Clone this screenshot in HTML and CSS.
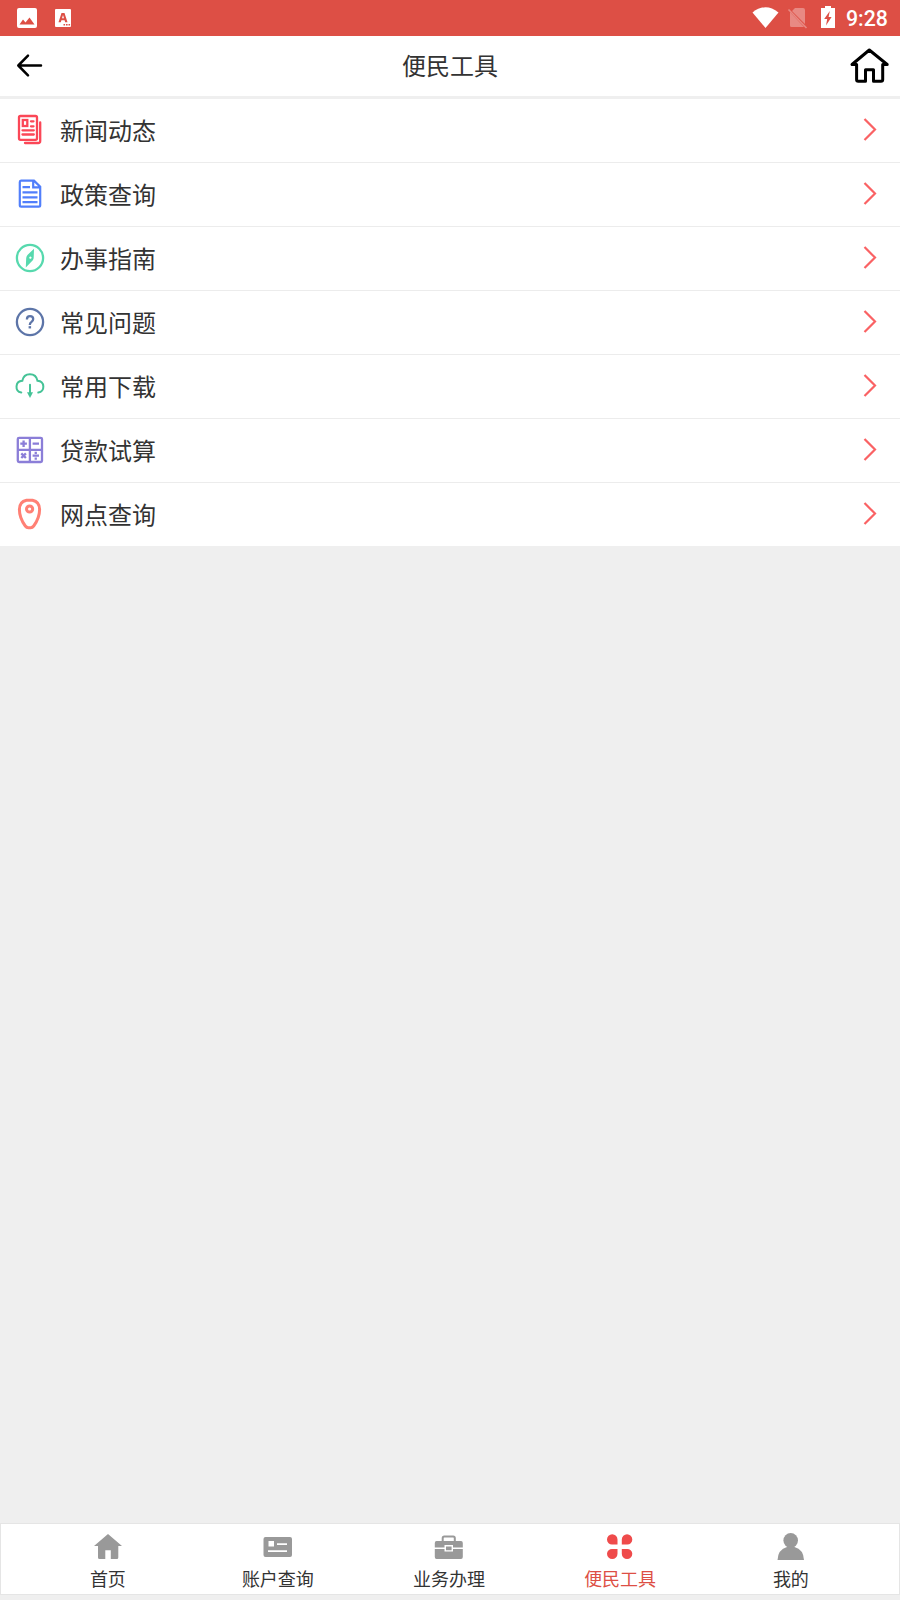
FILE: index.html
```html
<!DOCTYPE html>
<html lang="zh-CN">
<head>
<meta charset="utf-8">
<title>便民工具</title>
<link rel="stylesheet" href="styles.css">
</head>
<body>
<div class="screen">
  <div class="status">
    <svg class="status-left" viewBox="0 0 90 36">
      <path fill="#fff" fill-rule="evenodd" d="M19 8h16q2 0 2 2v16q0 2-2 2h-16q-2 0-2-2v-16q0-2 2-2zM19.500 24.500h15l-5-7-4 5-2.500-3z"/>
      <path fill="#fff" fill-rule="evenodd" d="M56 9h14q1 0 1 1v16q0 1-1 1h-14q-1 0-1-1v-16q0-1 1-1zM61.500 13l-3 9.300h2.300l.6-2h3.200l.6 2h2.300l-3-9.300zM62 18.300l1-3.300 1 3.300zM63.500 24v1.600h1.600v-1.600zM66 24v1.600h1.600v-1.600zM68.500 24v1.600h1.600v-1.600z"/>
    </svg>
    <svg class="status-right" viewBox="750 0 90 36">
      <path fill="#fff" d="M752.500 12.500Q765.500 2 778.500 12.500L765.500 28z"/>
      <path fill="#e88983" d="M795 8h8q2 0 2 2v14l-13-13zM790 12l14 15h-12.500q-1.500 0-1.500-1.500z"/>
      <path stroke="#e88983" stroke-width="1.600" d="M788.500 9.500l18 18.500"/>
      <path fill="#fff" fill-rule="evenodd" d="M825 6h6v2h4v20h-14v-20h4zM829.800 11l-5.600 8h3l-1.200 6.500 5.600-8.500h-3z"/>
    </svg>
    <span class="clock">9:28</span>
  </div>
  <header class="header">
    <svg class="back" viewBox="0 36 60 60"><path d="M41 65.500H18.500M28 55.700L18.300 65.500L28 75.300"/></svg>
    <h1 class="title">便民工具</h1>
    <svg class="home" viewBox="840 36 60 60"><path d="M869.300 50L852 64.500H856.600V79.500Q856.600 81.200 858.300 81.200H865.500V69.700H873.500V81.200H881Q882.700 81.200 882.700 79.500V64.500H887.200Z"/></svg>
  </header>
  <main class="list">
    <a class="row">
      <svg class="icon news" viewBox="15 0 30 63"><rect x="19" y="17" width="18" height="23.800" rx="1.500"/><path d="M40.200 23.500v18.500q0 2-2 2H25"/><rect x="22.800" y="21" width="4.500" height="6"/><path d="M31 22.300h2.500M31 27.300h2.500M22.500 31.300h11.300M22.500 35.500h11.300"/></svg>
      <span class="label">新闻动态</span><svg class="chevron" viewBox="860 0 20 63"><path d="M864.500 20L875 30.600L864.500 41"/></svg>
    </a>
    <a class="row">
      <svg class="icon policy" viewBox="15 0 30 63"><path d="M21 17.700H34L40.200 23.800V42.300Q40.200 43.700 38.800 43.700H21.200Q19.800 43.700 19.800 42.300V19.100Q19.800 17.700 21 17.700ZM33.200 18V24.300H40M22.500 24.100H30M22.500 29.300H37.500M22.500 34.300H37.500M22.500 39.200H37.500"/></svg>
      <span class="label">政策查询</span><svg class="chevron" viewBox="860 0 20 63"><path d="M864.500 20L875 30.600L864.500 41"/></svg>
    </a>
    <a class="row">
      <svg class="icon guide" viewBox="15 0 30 63"><circle cx="30" cy="31" r="13.100"/><path class="needle" d="M34 21.800L27.700 27.800Q26.400 29.300 26.200 31L25.800 40.500L32.800 33.200Q33.700 32 33.700 30.500ZM30.400 29.500a1.100 1.100 0 1 0 .01 0Z"/></svg>
      <span class="label">办事指南</span><svg class="chevron" viewBox="860 0 20 63"><path d="M864.500 20L875 30.600L864.500 41"/></svg>
    </a>
    <a class="row">
      <svg class="icon question" viewBox="15 0 30 63"><circle cx="30" cy="31" r="13.100"/><path d="M26.900 28.500Q26.900 25.200 30 25.200Q33.200 25.200 33.200 28Q33.200 29.400 31.500 30.800Q29.800 32.100 29.800 34"/><path d="M28.600 36.300h2.500"/></svg>
      <span class="label">常见问题</span><svg class="chevron" viewBox="860 0 20 63"><path d="M864.500 20L875 30.600L864.500 41"/></svg>
    </a>
    <a class="row">
      <svg class="icon download" viewBox="15 0 30 63"><path d="M21.300 37.600C14.500 36.200 15 26.200 22.300 25.700C24 17 35.800 17 37.500 25.700C45 26.200 45.300 36.500 38.300 37.600M30 29.800v8"/><path class="solid" d="M27 37.300h6l-3 5.700z"/></svg>
      <span class="label">常用下载</span><svg class="chevron" viewBox="860 0 20 63"><path d="M864.500 20L875 30.600L864.500 41"/></svg>
    </a>
    <a class="row">
      <svg class="icon calc" viewBox="15 0 30 63"><rect x="17.800" y="18.800" width="24.200" height="24.200" rx="1.300"/><path d="M29.900 18.600v24.600M17.600 30.900h24.600M20.300 24.700h6.600M23.600 21.400v6.600M32.600 24.700h6.400M21.300 34.400l4.600 4.600M25.900 34.400l-4.600 4.600M32.600 36.700h6.400M34.600 33.800h2.300M34.600 39.600h2.300"/></svg>
      <span class="label">贷款试算</span><svg class="chevron" viewBox="860 0 20 63"><path d="M864.500 20L875 30.600L864.500 41"/></svg>
    </a>
    <a class="row">
      <svg class="icon place" viewBox="15 0 30 63"><path d="M26.500 17.300Q19.400 18.800 19.400 26.500C19.400 32.500 22 38.500 25.300 43Q26.600 44.700 28.300 44.700H30.700Q32.400 44.700 33.700 43C37 38.500 39.600 32.500 39.600 26.500Q39.600 18.800 32.500 17.300Z"/><circle cx="29.600" cy="26" r="3.100"/></svg>
      <span class="label">网点查询</span><svg class="chevron" viewBox="860 0 20 63"><path d="M864.500 20L875 30.600L864.500 41"/></svg>
    </a>
  </main>
  <nav class="tabs">
    <a class="tab"><svg class="tab-icon" viewBox="93 1530 30 32"><path d="M108 1534L122 1546H118.300V1557.500Q118.300 1559 116.800 1559H110.800V1550.300H105.300V1559H99.500Q98 1559 98 1557.500V1546H94Z"/></svg><span>首页</span></a>
    <a class="tab second"><svg class="tab-icon" viewBox="263 1530 30 32"><path fill-rule="evenodd" d="M265.500 1537H290Q292 1537 292 1539V1555Q292 1557 290 1557H265.500Q263.500 1557 263.500 1555V1539Q263.500 1537 265.500 1537ZM268.500 1541V1546.500H274V1541ZM277 1543.300V1545H287V1543.300ZM268 1550.300V1552H287V1550.300Z"/></svg><span>账户查询</span></a>
    <a class="tab third"><svg class="tab-icon" viewBox="434 1530 30 32"><path fill="none" stroke="#999" stroke-width="2" d="M442.700 1542V1538Q442.700 1536.400 444.300 1536.400H453.200Q454.800 1536.400 454.800 1538V1542"/><path fill-rule="evenodd" d="M436.500 1541H461Q462.800 1541 462.800 1543V1547.400H453V1545H444.500V1547.400H434.800V1543Q434.800 1541 436.500 1541ZM434.800 1549H444.500V1551.600H453V1549H462.800V1557Q462.800 1559 461 1559H436.500Q434.800 1559 434.800 1557ZM446 1546.500H451.600V1550.200H446Z"/></svg><span>业务办理</span></a>
    <a class="tab active"><svg class="tab-icon" viewBox="605 1530 30 32"><path d="M607 1539.500a5.250 5.250 0 0 1 10.500 0V1544.500H612.300a5 5 0 0 1-5.300-5ZM621.800 1539.500a5.250 5.250 0 0 1 10.500 0a5 5 0 0 1-5.300 5H621.800ZM617.500 1549V1553.800a5.250 5.250 0 0 1-10.500 0a5 5 0 0 1 5.300-4.800ZM621.800 1549H627a5 5 0 0 1 5.300 4.800a5.250 5.250 0 0 1-10.500 0Z"/></svg><span>便民工具</span></a>
    <a class="tab"><svg class="tab-icon" viewBox="776 1530 30 32"><ellipse cx="790.700" cy="1540.500" rx="7.300" ry="7.500"/><path d="M777.500 1560Q778 1549.500 787 1547H794.500Q803.500 1549.500 804 1560Z"/></svg><span>我的</span></a>
  </nav>
</div>
</body>
</html>
```
FILE: styles.css
```css
* { box-sizing: border-box; }
body { margin: 0; background: #efefef; color: #333; font-family: "Noto Sans CJK SC", sans-serif; }
svg { display: block; flex: none; fill: none; }
.screen { height: 1600px; display: flex; flex-direction: column; padding-bottom: 5px; }
.status { height: 36px; flex: none; background: #dd4f45; display: flex; align-items: center; }
.status-left { width: 90px; height: 36px; }
.status-right { width: 90px; height: 36px; margin-left: auto; }
.clock { width: 60px; padding-left: 6px; color: #fff; font: 500 21.300px/36px Roboto, sans-serif; padding-top: 1px; }
.header { height: 63px; flex: none; background: #fff; border-bottom: 3px solid #efefef; display: flex; align-items: center; }
.title { flex: 1; margin: 0; text-align: center; font-size: 24px; font-weight: 400; line-height: 58px; padding-bottom: 2px; }
.back, .home { width: 60px; height: 60px; stroke: #000; stroke-linecap: round; stroke-linejoin: round; }
.back { stroke-width: 2.500; }
.home { stroke-width: 3; }
.list { background: #fff; }
.row { height: 64px; border-bottom: 1px solid #ececec; display: flex; padding: 0 20px 0 15px; }
.row:last-child { height: 63px; border-bottom: 0; }
.label { flex: 1; padding-left: 15px; font-size: 24px; line-height: 61px; }
.icon { width: 30px; height: 63px; stroke-width: 2; }
.chevron { width: 20px; height: 63px; stroke: #fa6264; stroke-width: 2.200; }
.news { stroke: #fb4757; stroke-width: 2.300; stroke-linecap: round; }
.policy { stroke: #517ffb; stroke-width: 2.200; }
.guide { stroke: #57d9ae; stroke-width: 2.300; }
.needle { fill: #57d9ae; fill-rule: evenodd; stroke: none; }
.question { stroke: #5d75a8; stroke-width: 2.300; }
.download { stroke: #45c397; stroke-width: 2; stroke-linecap: round; }
.solid { fill: #45c397; stroke: none; }
.calc { stroke: #8b7ed8; stroke-width: 2.300; }
.place { stroke: #ff8075; stroke-width: 3; }
.tabs { margin-top: auto; height: 72px; background: #fff; border: 1px solid #e5e5e5; display: flex; padding: 6px 21.500px 0; }
.tab { width: 170.750px; display: flex; flex-direction: column; align-items: center; font-size: 18px; line-height: 26px; }
.second { padding-right: 1.500px; }
.third { padding-right: 0.600px; }
.tab-icon { width: 30px; height: 32px; fill: #999; margin-bottom: 3px; }
.active { color: #dd4f45; }
.active .tab-icon { fill: #ef4b4b; }
```
